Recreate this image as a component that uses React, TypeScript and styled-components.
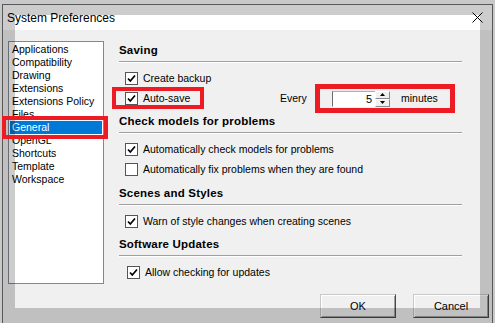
import React from "react";
import styled, { createGlobalStyle } from "styled-components";

const Global = createGlobalStyle`
  html, body { margin: 0; padding: 0; background: #fcfcfc; overflow: hidden; }
  body { font-family: "Liberation Sans", Arial, sans-serif; color: #000; }
`;

const Stage = styled.div`
  position: relative;
  width: 495px;
  height: 323px;
  overflow: hidden;
  box-sizing: border-box;
  padding: 4px 0 0 2px;
`;

const Window = styled.div`
  width: 491px;
  height: 340px;
  box-sizing: border-box;
  border: 1px solid #6e6e6e;
  border-bottom: none;
  background: #f0f0f0;
  display: flex;
  flex-direction: column;
`;

const TitleBar = styled.div`
  height: 25px;
  flex: none;
  background: #ffffff;
  display: flex;
  align-items: center;
  justify-content: space-between;
  padding: 0 9px 0 4px;
  font-size: 12px;
`;

const Body = styled.div`
  display: flex;
  padding: 11px 0 0 5px;
`;

const List = styled.ul`
  list-style: none;
  margin: 0;
  padding: 1px 0;
  width: 96px;
  height: 243px;
  box-sizing: border-box;
  border: 1px solid #828790;
  background: #ffffff;
  font-size: 10.5px;
`;

const Item = styled.li<{ $selected?: boolean }>`
  height: 13px;
  line-height: 13px;
  margin: 0 ${(p) => (p.$selected ? "1px" : "0")};
  padding-left: ${(p) => (p.$selected ? "2px" : "3px")};
  background: ${(p) => (p.$selected ? "#0078d7" : "transparent")};
  color: ${(p) => (p.$selected ? "#ffffff" : "#000000")};
  white-space: nowrap;
`;

const Panel = styled.div`
  margin-top: -1px;
  margin-left: 15px;
  width: 343px;
  display: flex;
  flex-direction: column;
  gap: 3px;
  font-size: 10.5px;
`;

const Section = styled.section<{ $extra?: number }>`
  display: flex;
  flex-direction: column;
  margin-top: ${(p) => p.$extra ?? 0}px;
`;

const Header = styled.div`
  height: 20px;
  line-height: 20px;
  font-weight: bold;
  font-size: 11.5px;
  letter-spacing: 0.2px;
`;

const Separator = styled.div`
  margin-top: 1px;
  height: 2px;
  box-sizing: border-box;
  border-top: 1px solid #a0a0a0;
  border-bottom: 1px solid #ffffff;
`;

const Rows = styled.div`
  margin-top: 5px;
  padding-left: 6px;
  display: flex;
  flex-direction: column;
`;

const Row = styled.div<{ $indent?: number }>`
  height: 20px;
  display: flex;
  align-items: center;
  padding-left: ${(p) => p.$indent ?? 0}px;
`;

const CheckLabel = styled.label<{ $width?: number }>`
  display: flex;
  align-items: center;
  gap: 5px;
  white-space: nowrap;
  ${(p) => (p.$width ? `width: ${p.$width}px;` : "")}
`;

const Box = styled.span`
  width: 13px;
  height: 13px;
  box-sizing: border-box;
  border: 1px solid #555555;
  background: #ffffff;
  display: flex;
  align-items: center;
  justify-content: center;
`;

const Every = styled.span`
  width: 52px;
`;

const Spinner = styled.div`
  display: flex;
  height: 16px;
  margin-top: 1px;
`;

const SpinInput = styled.div`
  width: 43px;
  box-sizing: border-box;
  border-left: 1px solid #6b6b6b;
  border-top: 1px solid #b0b0b0;
  border-bottom: 1px solid #ffffff;
  background: #ffffff;
  text-align: right;
  padding-right: 3px;
  line-height: 14px;
  font-size: 11px;
`;

const SpinButtons = styled.div`
  width: 15px;
  display: flex;
  flex-direction: column;
`;

const SpinButton = styled.div`
  flex: 1;
  box-sizing: border-box;
  background: #f0f0f0;
  border: 1px solid;
  border-color: #ffffff #8a8a8a #8a8a8a #ffffff;
  display: flex;
  align-items: center;
  justify-content: center;
`;

const Unit = styled.span`
  margin-left: 11px;
`;

const Footer = styled.div`
  display: flex;
  justify-content: flex-end;
  gap: 17px;
  padding-right: 3px;
  margin-top: 10px;
`;

const Button = styled.button`
  width: 76px;
  height: 24px;
  box-sizing: border-box;
  font-family: "Liberation Sans", Arial, sans-serif;
  font-size: 11px;
  color: #000;
  background: #f0f0f0;
  border: 1px solid;
  border-color: #c8c8c8 #4a4a4a #4a4a4a #c8c8c8;
  box-shadow: inset 1px 1px #ffffff, inset -1px -1px #a0a0a0;
  padding: 0;
`;

const Spotlight = styled.div`
  position: absolute;
  left: 15px;
  top: 15px;
  width: 465px;
  height: 293px;
  box-shadow: 0 0 0 800px rgba(0, 0, 0, 0.2);
  pointer-events: none;
`;

const Mark = styled.div<{ $x: number; $y: number; $w: number; $h: number; $t: number }>`
  position: absolute;
  left: ${(p) => p.$x}px;
  top: ${(p) => p.$y}px;
  width: ${(p) => p.$w}px;
  height: ${(p) => p.$h}px;
  box-sizing: border-box;
  border: ${(p) => p.$t}px solid #ed1c24;
  pointer-events: none;
`;

const Check = () => (
  <svg width="11" height="11" viewBox="0 0 11 11">
    <path d="M2 5.5 L4.3 8 L9 2.5" fill="none" stroke="#000" strokeWidth="1.7" />
  </svg>
);

const CheckBox = ({ checked }: { checked?: boolean }) => <Box>{checked ? <Check /> : null}</Box>;

const Close = () => (
  <svg width="11" height="11" viewBox="0 0 11 11">
    <path d="M0.5 0.5 L10.5 10.5 M10.5 0.5 L0.5 10.5" stroke="#000" strokeWidth="1" />
  </svg>
);

const Arrow = ({ up }: { up?: boolean }) => (
  <svg width="5" height="3" viewBox="0 0 5 3">
    <path d={up ? "M0 3 L2.5 0 L5 3 Z" : "M0 0 L2.5 3 L5 0 Z"} fill="#000" />
  </svg>
);

const items = [
  "Applications",
  "Compatibility",
  "Drawing",
  "Extensions",
  "Extensions Policy",
  "Files",
  "General",
  "OpenGL",
  "Shortcuts",
  "Template",
  "Workspace",
];

export default function App() {
  return (
    <Stage>
      <Global />
      <Window>
        <TitleBar>
          <span>System Preferences</span>
          <Close />
        </TitleBar>
        <Body>
          <List>
            {items.map((it) => (
              <Item key={it} $selected={it === "General"}>
                {it}
              </Item>
            ))}
          </List>
          <Panel>
            <Section>
              <Header>Saving</Header>
              <Separator />
              <Rows>
                <Row>
                  <CheckLabel>
                    <CheckBox checked />
                    Create backup
                  </CheckLabel>
                </Row>
                <Row>
                  <CheckLabel $width={155}>
                    <CheckBox checked />
                    Auto-save
                  </CheckLabel>
                  <Every>Every</Every>
                  <Spinner>
                    <SpinInput>5</SpinInput>
                    <SpinButtons>
                      <SpinButton>
                        <Arrow up />
                      </SpinButton>
                      <SpinButton>
                        <Arrow />
                      </SpinButton>
                    </SpinButtons>
                  </Spinner>
                  <Unit>minutes</Unit>
                </Row>
              </Rows>
            </Section>
            <Section>
              <Header>Check models for problems</Header>
              <Separator />
              <Rows>
                <Row>
                  <CheckLabel>
                    <CheckBox checked />
                    Automatically check models for problems
                  </CheckLabel>
                </Row>
                <Row>
                  <CheckLabel>
                    <CheckBox />
                    Automatically fix problems when they are found
                  </CheckLabel>
                </Row>
              </Rows>
            </Section>
            <Section $extra={1}>
              <Header>Scenes and Styles</Header>
              <Separator />
              <Rows>
                <Row>
                  <CheckLabel>
                    <CheckBox checked />
                    Warn of style changes when creating scenes
                  </CheckLabel>
                </Row>
              </Rows>
            </Section>
            <Section>
              <Header>Software Updates</Header>
              <Separator />
              <Rows>
                <Row $indent={2}>
                  <CheckLabel>
                    <CheckBox checked />
                    Allow checking for updates
                  </CheckLabel>
                </Row>
              </Rows>
            </Section>
          </Panel>
        </Body>
        <Footer>
          <Button>OK</Button>
          <Button>Cancel</Button>
        </Footer>
      </Window>
      <Spotlight />
      <Mark $x={2} $y={116} $w={106} $h={23} $t={4} />
      <Mark $x={112} $y={87} $w={92} $h={22} $t={4} />
      <Mark $x={315} $y={84} $w={140} $h={29} $t={5} />
    </Stage>
  );
}
